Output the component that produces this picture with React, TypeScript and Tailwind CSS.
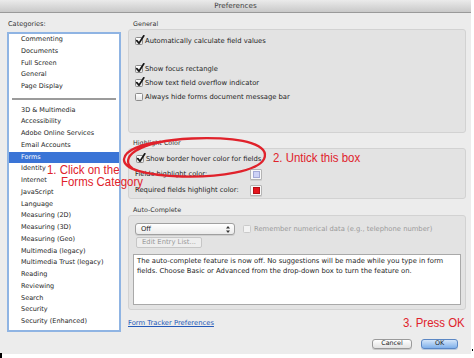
import React from 'react';

const topCats = ['Commenting', 'Documents', 'Full Screen', 'General', 'Page Display'];
const moreCats = [
  '3D & Multimedia',
  'Accessibility',
  'Adobe Online Services',
  'Email Accounts',
  'Forms',
  'Identity',
  'Internet',
  'JavaScript',
  'Language',
  'Measuring (2D)',
  'Measuring (3D)',
  'Measuring (Geo)',
  'Multimedia (legacy)',
  'Multimedia Trust (legacy)',
  'Reading',
  'Reviewing',
  'Search',
  'Security',
  'Security (Enhanced)',
  'Spelling',
];

function Check({ on, dim }: { on?: boolean; dim?: boolean }) {
  return (
    <span className="relative inline-block w-[8px] h-[8px] shrink-0">
      <span
        className={
          dim
            ? 'absolute inset-0 rounded-[1.5px] border border-[#cacaca] bg-[#f3f3f3]'
            : 'absolute inset-0 rounded-[1.5px] border border-[#8c8c8c] bg-gradient-to-b from-white to-[#e4e4e4]'
        }
      />
      {on && (
        <svg className="absolute left-[0px] top-[-2px] w-[10px] h-[10px]" viewBox="0 0 10 10">
          <path d="M1.8 5.6 L4 8.2 L8.8 0.8" fill="none" stroke="#151515" strokeWidth="1.7" strokeLinecap="round" strokeLinejoin="round" />
        </svg>
      )}
    </span>
  );
}

function Swatch({ color, edge }: { color: string; edge: string }) {
  return (
    <span className="w-[12px] h-[11px] flex items-center justify-center border border-[#b4b4b4] bg-[#f8f8f8] rounded-[1px] shadow-[0_1px_0_#d0d0d0]">
      <span className={`w-[7px] h-[7px] border ${edge} ${color}`} />
    </span>
  );
}

function GroupLabel({ text }: { text: string }) {
  return <div className="h-[10px] leading-[10px] pl-[5px] text-[6.4px] text-[#333]">{text}</div>;
}

// red hand-written notes, narrowed Liberation Sans
const note =
  "absolute origin-left scale-x-[0.88] text-[13px] leading-[14px] text-[#e0222b] font-['Liberation_Sans',sans-serif] whitespace-nowrap";

export default function App() {
  return (
    <div className="relative w-[474px] h-[358px] bg-white overflow-hidden font-['DejaVu_Sans',sans-serif] text-[#1e1e1e]">
      <div className="relative w-[471px] h-[354px] bg-[#ececec] flex flex-col">
        {/* title bar */}
        <div className="h-[13px] shrink-0 bg-gradient-to-b from-[#ebebeb] to-[#c9c9c9] border-b border-[#9a9a9a] flex items-center justify-center text-[7.2px] text-[#404040]">
          Preferences
        </div>

        <div className="flex flex-1 pl-[7px]">
          {/* categories */}
          <div className="w-[114px] shrink-0 pt-[6px] flex flex-col">
            <div className="h-[10px] leading-[10px] pl-[1px] text-[6.6px] text-[#333]">Categories:</div>
            <div className="mt-[3px] h-[300px] border-2 border-[#8fb4e3] bg-white overflow-hidden text-[6.5px]">
              {topCats.map((c) => (
                <div key={c} className="h-[11.75px] leading-[11.75px] pl-[12px]">
                  {c}
                </div>
              ))}
              <div className="h-[11.75px] flex items-center px-[3px]">
                <div className="h-[2px] w-full bg-[#9b9b9b]" />
              </div>
              {moreCats.map((c) =>
                c === 'Forms' ? (
                  <div key={c} className="h-[11.75px] leading-[11.75px] pl-[12px] bg-[#3a74d6] text-white">
                    {c}
                  </div>
                ) : (
                  <div key={c} className="h-[11.75px] leading-[11.75px] pl-[12px]">
                    {c}
                  </div>
                ),
              )}
            </div>
          </div>

          {/* right pane */}
          <div className="ml-[7px] w-[338px] pt-[6px] flex flex-col text-[6.8px]">
            <GroupLabel text="General" />
            <div className="h-[104px] border border-[#d2d2d2] bg-[#e3e3e3] rounded-[3px] pt-[4px] pl-[6px]">
              <div className="h-[14px] flex items-center gap-[2px]">
                <Check on />
                <span>Automatically calculate field values</span>
              </div>
              <div className="h-[14px]" />
              <div className="h-[14px] flex items-center gap-[2px]">
                <Check on />
                <span>Show focus rectangle</span>
              </div>
              <div className="h-[14px] flex items-center gap-[2px]">
                <Check on />
                <span>Show text field overflow indicator</span>
              </div>
              <div className="h-[14px] flex items-center gap-[2px]">
                <Check />
                <span>Always hide forms document message bar</span>
              </div>
            </div>

            <div className="mt-[5px]">
              <GroupLabel text="Highlight Color" />
            </div>
            <div className="h-[51px] border border-[#d2d2d2] bg-[#e3e3e3] rounded-[3px] pt-[3px] pl-[6px]">
              <div className="h-[14px] flex items-center gap-[2px] pl-[1px]">
                <Check on />
                <span>Show border hover color for fields</span>
              </div>
              <div className="h-[16px] flex items-center">
                <span className="w-[115px]">Fields highlight color:</span>
                <Swatch color="bg-[#cdd2f6]" edge="border-[#a3a9d6]" />
              </div>
              <div className="h-[16px] flex items-center">
                <span className="w-[115px]">Required fields highlight color:</span>
                <Swatch color="bg-[#e6141c]" edge="border-[#b30e14]" />
              </div>
            </div>

            <div className="mt-[6px]">
              <GroupLabel text="Auto-Complete" />
            </div>
            <div className="h-[95px] border border-[#d2d2d2] bg-[#e3e3e3] rounded-[3px] pt-[7px] flex flex-col">
              <div className="h-[12px] flex items-center pl-[6px]">
                <div className="w-[100px] h-[12px] rounded-[3px] border border-[#a0a0a0] bg-gradient-to-b from-white to-[#ebebeb] flex items-center justify-between pl-[5px] pr-[4px] shadow-[0_1px_0_#cfcfcf]">
                  <span>Off</span>
                  <svg className="w-[4px] h-[7px]" viewBox="0 0 4 7">
                    <path d="M2 0 L4 2.6 L0 2.6 Z M2 7 L4 4.4 L0 4.4 Z" fill="#333" />
                  </svg>
                </div>
                <div className="ml-[8px] flex items-center gap-[3px] text-[#9a9a9a]">
                  <Check dim />
                  <span>Remember numerical data (e.g., telephone number)</span>
                </div>
              </div>
              <div className="mt-[2px] ml-[7px] w-[66px] h-[11px] rounded-[2px] border border-[#c6c6c6] bg-[#eeeeee] flex items-center justify-center text-[#9a9a9a]">
                Edit Entry List...
              </div>
              <div className="mt-[6px] mx-[4px] h-[51px] border border-[#a9a9a9] bg-white pt-[1px] pl-[3px] leading-[10px]">
                The auto-complete feature is now off. No suggestions will be made while you type in form
                <br />
                fields. Choose Basic or Advanced from the drop-down box to turn the feature on.
              </div>
            </div>

            <div className="mt-[8px] h-[10px] leading-[10px] text-[#2459b8] underline">Form Tracker Preferences</div>

            <div className="mt-[11px] flex justify-end gap-[9px] pr-[8px] text-[6.4px]">
              <div className="w-[40px] h-[10px] rounded-[3px] border border-[#9a9a9a] bg-gradient-to-b from-white to-[#e2e2e2] flex items-center justify-center shadow-[0_1px_0_#c8c8c8]">
                Cancel
              </div>
              <div className="w-[37px] h-[10px] rounded-[3px] border border-[#5b87c4] bg-gradient-to-b from-[#d3e5f9] to-[#7fb0ea] flex items-center justify-center shadow-[0_1px_0_#b8c8dc]">
                OK
              </div>
            </div>
          </div>
        </div>

        {/* annotations */}
        <svg className="absolute left-[120px] top-[135px] w-[150px] h-[46px] pointer-events-none" viewBox="0 0 150 46">
          <path
            d="M12 33 C0 24 14 6 72 3.5 C128 1.5 150 11 144 24 C138 36 100 42.5 62 41.5 C26 40.5 3 34 4 24 C5 15 22 9 40 7"
            fill="none"
            stroke="#e0222b"
            strokeWidth="2.3"
            strokeLinecap="round"
          />
        </svg>
        <div className={`${note} left-[47px] top-[163px]`}>1. Click on the</div>
        <div className={`${note} left-[61px] top-[175px]`}>Forms Category</div>
        <div className={`${note} left-[273px] top-[151px]`}>2. Untick this box</div>
        <div className={`${note} left-[403px] top-[316px]`}>3. Press OK</div>
      </div>
      <div className="absolute left-[0px] top-[353px] w-[2px] h-[5px] bg-black" />
      <div className="absolute left-[472px] top-[349px] w-[1px] h-[2px] bg-black" />
    </div>
  );
}
